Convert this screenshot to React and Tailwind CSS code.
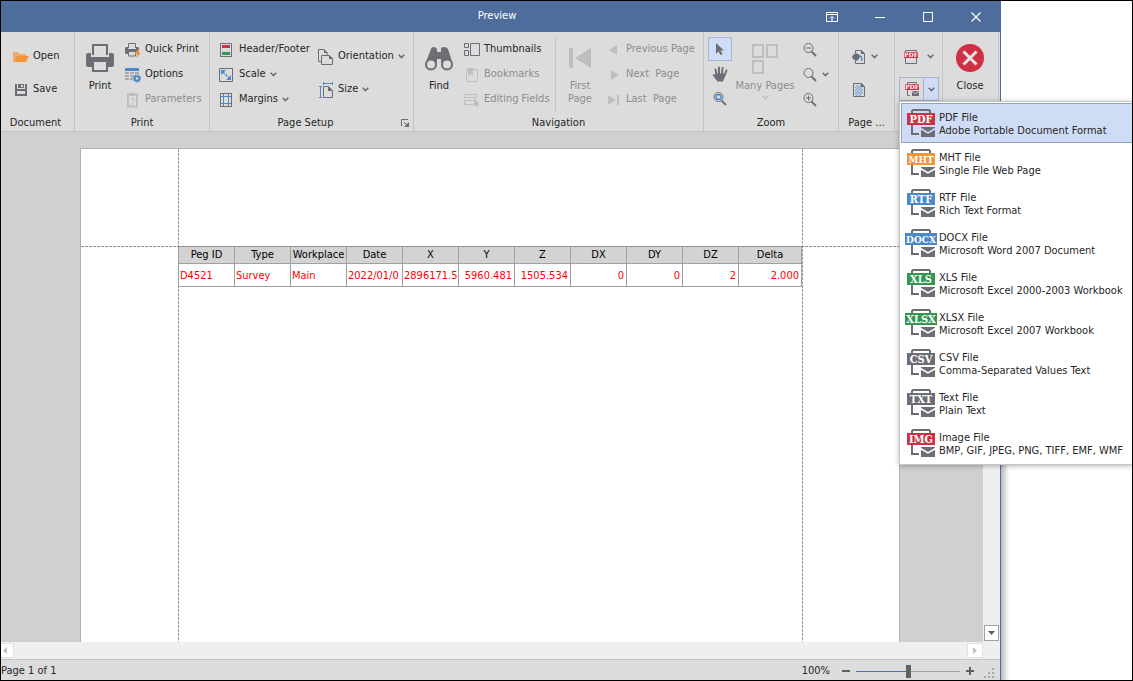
// src/App.jsx
import React, { useState } from 'react';

const GRAY = '#6d6d75';
const DIM = '#bebebe';

const exportFormats = [
  { tag: 'PDF', name: 'PDF File', detail: 'Adobe Portable Document Format', color: '#d12f46', size: 11 },
  { tag: 'MHT', name: 'MHT File', detail: 'Single File Web Page', color: '#f0973c', size: 10 },
  { tag: 'RTF', name: 'RTF File', detail: 'Rich Text Format', color: '#4b89c8', size: 11 },
  { tag: 'DOCX', name: 'DOCX File', detail: 'Microsoft Word 2007 Document', color: '#4b89c8', size: 10, wide: true },
  { tag: 'XLS', name: 'XLS File', detail: 'Microsoft Excel 2000-2003 Workbook', color: '#379552', size: 11 },
  { tag: 'XLSX', name: 'XLSX File', detail: 'Microsoft Excel 2007 Workbook', color: '#379552', size: 11, wide: true },
  { tag: 'CSV', name: 'CSV File', detail: 'Comma-Separated Values Text', color: GRAY, size: 11 },
  { tag: 'TXT', name: 'Text File', detail: 'Plain Text', color: GRAY, size: 11 },
  { tag: 'IMG', name: 'Image File', detail: 'BMP, GIF, JPEG, PNG, TIFF, EMF, WMF', color: '#d12f46', size: 11 },
];

const columns = [
  { title: 'Peg ID', value: 'D4521' },
  { title: 'Type', value: 'Survey' },
  { title: 'Workplace', value: 'Main' },
  { title: 'Date', value: '2022/01/0' },
  { title: 'X', value: '2896171.5', number: true },
  { title: 'Y', value: '5960.481', number: true },
  { title: 'Z', value: '1505.534', number: true },
  { title: 'DX', value: '0', number: true },
  { title: 'DY', value: '0', number: true },
  { title: 'DZ', value: '2', number: true },
  { title: 'Delta', value: '2.000', number: true },
];

const Svg = ({ w = 16, h = 16, children }) => (
  <svg width={w} height={h} viewBox={`0 0 ${w} ${h}`} fill="none" className="shrink-0" aria-hidden="true">
    {children}
  </svg>
);

const Chevron = ({ color = GRAY }) => (
  <Svg w={7} h={5}>
    <path d="M0.7 0.8 3.5 3.6 6.3 0.8" stroke={color} strokeWidth="1.6" />
  </Svg>
);

/* ---------- icons ---------- */

const OpenIcon = () => (
  <Svg>
    <path d="M0 3h5l1 2h7v2H4L1 13H0z" fill="#f0a968" />
    <path d="M4 7h12l-3 6H1z" fill="#f3953a" />
  </Svg>
);

const SaveIcon = () => (
  <Svg>
    <path d="M2 2h2v5h8V2h2v12H2z" fill={GRAY} />
    <path d="M5 2h6v4H5z" fill={GRAY} />
    <path d="M8 3h2v2H8z" fill="#dcdcdc" />
    <path d="M4 9h8v3H4z" fill="#dcdcdc" />
  </Svg>
);

const PrintIcon = () => (
  <Svg w={28} h={28}>
    <path d="M7 11V1h14v10" stroke={GRAY} strokeWidth="2" />
    <path d="M1.500 9H5v4h18V9h3.500L28 10.500V21.500L26.500 23H1.500L0 21.500V10.500z" fill={GRAY} />
    <path d="M7 17h14v10H7z" fill="#dcdcdc" stroke={GRAY} strokeWidth="2" />
  </Svg>
);

const QuickPrintIcon = () => (
  <Svg>
    <path d="M3.500 6V1.500h7V6" stroke={GRAY} />
    <path d="M1 5h2v2h8V5h2l1 1v5l-1 1H1l-1-1V6z" fill={GRAY} />
    <path d="M3.500 9.500h7v4.500h-7z" fill="#dcdcdc" stroke={GRAY} />
    <path d="M13.500 7 9 12h3l-1 4 5-5h-3l2-4z" fill="#f3953a" />
  </Svg>
);

const OptionsIcon = () => (
  <Svg>
    <path d="M0 1h14v3H0z" fill="#4b89c8" />
    <path d="M0 5h4v2H0zM5 5h4v2H5zM10 5h4v2h-4zM0 8h4v2H0zM5 8h4v2H5zM0 11h4v2H0zM5 11h3v2H5z" fill="#a8a8aa" />
    <circle cx="12" cy="11.500" r="2.300" stroke="#4b89c8" strokeWidth="2" />
    <circle cx="12" cy="11.500" r="3.600" stroke="#4b89c8" strokeWidth="1.200" strokeDasharray="1.400 1.400" />
  </Svg>
);

const ParametersIcon = () => (
  <Svg>
    <path d="M3 2.500v12h9v-12z" stroke={DIM} strokeWidth="2" />
    <path d="M5 1h5v3H5z" fill={DIM} />
    <path d="M6 7.500V6.500h3v2L7.500 9.500v1M7.500 11.500v1" stroke={DIM} />
  </Svg>
);

const HeaderFooterIcon = () => (
  <Svg>
    <path d="M1.500 1.500h11v13h-11z" stroke={GRAY} />
    <path d="M3 3h8v3H3z" fill="#d12f46" />
    <path d="M3 10h8v3H3z" fill="#379552" />
  </Svg>
);

const ScaleIcon = () => (
  <Svg>
    <path d="M.5 1.500h13v13H.5z" stroke={GRAY} />
    <path d="M4 5l6 6" stroke="#4b89c8" strokeWidth="1.500" strokeDasharray="2.500 1" />
    <path d="M2 3h5L2 8zM12 13H7l5-5z" fill="#4b89c8" />
  </Svg>
);

const MarginsIcon = () => (
  <Svg>
    <path d="M1.500 1.500h11v13h-11z" stroke={GRAY} />
    <path d="M4.500 2v12M9.500 2v12M2 4.500h10M2 11.500h10" stroke="#4b89c8" />
  </Svg>
);

const OrientationIcon = () => (
  <Svg>
    <path d="M3.500 12.500h-3v-12H6l3 3V6" stroke={GRAY} />
    <path d="M6 0v4h3.500z" fill={GRAY} />
    <path d="M3.500 6.500h8l3 3v6h-11z" fill="#dcdcdc" stroke={GRAY} />
    <path d="M11 6v4h4z" fill={GRAY} />
  </Svg>
);

const SizeIcon = () => (
  <Svg>
    <path d="M2.500 4v11.500M1 4.500h3M1 15.500h3M5 1.500h9M5.500 0v3M14.500 0v3" stroke="#4b89c8" />
    <path d="M5.500 4.500h5l4 4v7h-9z" stroke={GRAY} />
    <path d="M10 4v5h5z" fill={GRAY} />
  </Svg>
);

const FindIcon = () => (
  <Svg w={28} h={28}>
    <path d="M6 5Q6 3 8.500 3T12 5v3h4V5q0-2 3-2t4 2l4.500 14H16v-4h-4v4H.5z" fill={GRAY} />
    <circle cx="6" cy="20.500" r="5" fill="#dcdcdc" stroke={GRAY} strokeWidth="2" />
    <circle cx="22" cy="20.500" r="5" fill="#dcdcdc" stroke={GRAY} strokeWidth="2" />
    <path d="M12 9h4v6h-4z" fill={GRAY} />
  </Svg>
);

const ThumbnailsIcon = () => (
  <Svg>
    <path d="M.5 1.500h4v4h-4zM.5 8.500h4v5h-4zM6.500 1.500h9v12h-9z" stroke={GRAY} />
  </Svg>
);

const BookmarksIcon = () => (
  <Svg>
    <path d="M2.500 2.500h11v12h-11z" stroke={DIM} />
    <path d="M4 1h5v8L6.500 7 4 9z" fill={DIM} />
  </Svg>
);

const EditingFieldsIcon = () => (
  <Svg>
    <path d="M.5 2.500h12v3H.5zM9 8.500H.5v4H9" stroke={DIM} />
    <path d="M10 6v9l2-2 1.500 3 1-.5L13.500 12.500H16z" fill={DIM} />
  </Svg>
);

const FirstPageIcon = () => (
  <Svg w={22} h={28}>
    <path d="M0 4h4v20H0zM22 4v20L6 14z" fill={DIM} />
  </Svg>
);

const PreviousIcon = () => (
  <Svg w={12}>
    <path d="M9 3v10L1 8z" fill={DIM} />
  </Svg>
);

const NextIcon = () => (
  <Svg w={12}>
    <path d="M3 3v10l8-5z" fill={DIM} />
  </Svg>
);

const LastIcon = () => (
  <Svg w={12}>
    <path d="M0 3v10l8-5zM9 3h2v10H9z" fill={DIM} />
  </Svg>
);

const PointerIcon = () => (
  <Svg>
    <path d="M4 2v11l2.500-2.500L8.500 14l2-1-2-3.500H12z" fill={GRAY} />
  </Svg>
);

const HandIcon = () => (
  <Svg>
    <path d="M4.500 9 3.500 3.500M7 8V1.500M10 8l.6-6M12.500 9.500l2-5" stroke={GRAY} strokeWidth="2" strokeLinecap="round" />
    <path d="M3.500 7.500h9.500v3l-2 5H5.500L.5 9Q1.500 7.500 3.500 9z" fill={GRAY} />
  </Svg>
);

const Magnifier = ({ kind }) => (
  <Svg>
    <circle cx="6.500" cy="6" r="4.500" stroke={GRAY} />
    <path d="M9.500 9.500 14 14" stroke={GRAY} strokeWidth="1.800" />
    {kind === 'out' && <path d="M4 6h5" stroke={GRAY} />}
    {kind === 'in' && <path d="M4 6h5M6.500 3.500v5" stroke={GRAY} />}
    {kind === 'tool' && <circle cx="6.500" cy="6" r="2.500" stroke="#4b89c8" strokeWidth="1.400" />}
  </Svg>
);

const ManyPagesIcon = () => (
  <Svg w={26} h={30}>
    <path d="M1 1h10v12H1zM15 1h10v12H15zM1 17h10v12H1z" stroke={DIM} strokeWidth="2" />
  </Svg>
);

const PageColorIcon = () => (
  <Svg>
    <path d="M4.500 4V1.500h6l3 3v10h-9V12" stroke={GRAY} />
    <path d="M10 1v4h4z" fill={GRAY} />
    <path d="M1 8l1.500-2.500L5 4l3 1.500L9 8l-2 3-2 1-2.500-1.500z" fill={GRAY} />
    <path d="M8 6q4 0 3.500 6-2 0-1.500-3Q9.500 7.500 8 7.500z" fill="#4b89c8" />
  </Svg>
);

const WatermarkIcon = () => (
  <Svg>
    <path d="M4 6l3-3M4 9l6-6M4 12l8-8M5 14l7-7M8 14l4-4" stroke="#7fa9d6" strokeWidth="1.200" />
    <path d="M2.500 1.500h8l3 3v10h-11z" stroke={GRAY} />
    <path d="M10 1v4h4z" fill={GRAY} />
  </Svg>
);

const SmallPdfIcon = ({ mail }) => (
  <Svg>
    {mail ? (
      <g>
        <path d="M3.500 3V1.500h9V3M3.500 9v5.500H6" stroke={GRAY} />
        <path d="M8 10h7v5H8z" fill={GRAY} />
        <path d="M8 10.500l3.500 2 3.500-2" stroke="#dcdcdc" strokeWidth="0.8" />
      </g>
    ) : (
      <path d="M2.500 3V1.500h11V3M2.500 9v5.500h11V9" stroke={GRAY} />
    )}
    <path d="M1 3h14v6H1z" fill="#d12f46" />
    <text x="8" y="8" fill="#fff" fontSize="6" fontWeight="700" textAnchor="middle" fontFamily="DejaVu Serif, serif">
      PDF
    </text>
  </Svg>
);

const CloseIcon = () => (
  <Svg w={28} h={28}>
    <circle cx="14" cy="14" r="14" fill="#d12f46" />
    <path d="M7.500 7.500l13 13M20.500 7.500l-13 13" stroke="#e6e6e6" strokeWidth="3" />
  </Svg>
);

const FormatIcon = ({ format, active }) => (
  <Svg w={32} h={28}>
    <path d="M7 5V2l1-1h16l1 1v3M7 16v9h7" stroke={GRAY} strokeWidth="2" />
    <path d="M16 18h14v10H16z" fill={GRAY} />
    <path d="M15.500 19.500 23 24l7.500-4.500" stroke={active ? '#cfdcf5' : '#fff'} strokeWidth="1.500" />
    <rect x={format.wide ? 0 : 2} y="4" width={format.wide ? 32 : 28} height="12" fill={format.color} />
    <text
      x="16"
      y="14"
      fill="#fff"
      fontSize={format.size}
      fontWeight="700"
      textAnchor="middle"
      fontFamily="DejaVu Serif Condensed, DejaVu Serif, serif"
    >
      {format.tag}
    </text>
  </Svg>
);

/* ---------- ribbon parts ---------- */

const Group = ({ title, className, children }) => (
  <section className={`flex shrink-0 flex-col border-r border-[#c4c4c4] pt-[5px] ${className}`}>
    <div className="flex h-[78px] shrink-0 items-start">{children}</div>
    <h2 className="flex h-4 items-center justify-center">{title}</h2>
  </section>
);

const Column = ({ className = '', children }) => (
  <div className={`flex shrink-0 flex-col ${className}`}>{children}</div>
);

const Command = ({ icon, label, tall, menu, disabled }) => (
  <button
    type="button"
    disabled={disabled}
    className={`flex items-center gap-1 whitespace-pre text-left disabled:text-[#8c8c8c] ${tall ? 'h-[33px]' : 'h-[25px]'}`}
  >
    {icon}
    {label}
    {menu && <Chevron />}
  </button>
);

const BigCommand = ({ icon, label, className = '', disabled, children }) => (
  <button
    type="button"
    disabled={disabled}
    className={`flex shrink-0 flex-col items-center pt-[7px] leading-[13px] disabled:text-[#8c8c8c] ${className}`}
  >
    <span className="flex h-[35px] items-start">{icon}</span>
    {label}
    {children}
  </button>
);

const IconButton = ({ label, className = '', children }) => (
  <button type="button" aria-label={label} className={`flex items-center ${className}`}>
    {children}
  </button>
);

const Ribbon = () => (
  <div className="flex h-[100px] shrink-0 border-b border-[#c4c4c4] bg-[#dcdcdc]">
    <Group title="Document" className="w-[74px] pr-1">
      <Column className="pt-[3px] pl-3">
        <Command tall icon={<OpenIcon />} label="Open" />
        <Command tall icon={<SaveIcon />} label="Save" />
      </Column>
    </Group>
    <Group title="Print" className="w-[135px]">
      <BigCommand icon={<PrintIcon />} label="Print" className="w-[50px]" />
      <Column>
        <Command icon={<QuickPrintIcon />} label="Quick Print" />
        <Command icon={<OptionsIcon />} label="Options" />
        <Command icon={<ParametersIcon />} label="Parameters" disabled />
      </Column>
    </Group>
    <Group
      title={
        <>
          <span className="flex-1 text-center">Page Setup</span>
          <IconButton label="Page Setup dialog" className="mr-1">
            <Svg w={8} h={8}>
              <path d="M.5 7V.5H7" stroke={GRAY} />
              <path d="M3 3l3 3" stroke={GRAY} />
              <path d="M8 3v5H3z" fill={GRAY} />
            </Svg>
          </IconButton>
        </>
      }
      className="w-[204px]"
    >
      <Column className="w-[108px] pl-[9px]">
        <Command icon={<HeaderFooterIcon />} label="Header/Footer" />
        <Command icon={<ScaleIcon />} label="Scale" menu />
        <Command icon={<MarginsIcon />} label="Margins" menu />
      </Column>
      <Column className="pt-[3px]">
        <Command tall icon={<OrientationIcon />} label="Orientation" menu />
        <Command tall icon={<SizeIcon />} label="Size" menu />
      </Column>
    </Group>
    <Group title="Navigation" className="w-[290px]">
      <BigCommand icon={<FindIcon />} label="Find" className="w-[50px]" />
      <Column className="w-[92px] border-r border-[#c4c4c4]">
        <Command icon={<ThumbnailsIcon />} label="Thumbnails" />
        <Command icon={<BookmarksIcon />} label="Bookmarks" disabled />
        <Command icon={<EditingFieldsIcon />} label="Editing Fields" disabled />
      </Column>
      <BigCommand icon={<FirstPageIcon />} label="First" className="w-12" disabled>
        <span>Page</span>
      </BigCommand>
      <Column className="pl-1 [&>button]:gap-1.5">
        <Command icon={<PreviousIcon />} label="Previous Page" disabled />
        <Command icon={<NextIcon />} label="Next  Page" disabled />
        <Command icon={<LastIcon />} label="Last  Page" disabled />
      </Column>
    </Group>
    <Group title="Zoom" className="w-[135px]">
      <Column className="pl-1">
        <IconButton label="Pointer" className="h-6 w-6 justify-center border border-[#a3b7dc] bg-[#cfdcf5]">
          <PointerIcon />
        </IconButton>
        <IconButton label="Hand Tool" className="h-[25px] w-6 justify-center">
          <HandIcon />
        </IconButton>
        <IconButton label="Magnifier" className="h-[25px] w-6 justify-center">
          <Magnifier kind="tool" />
        </IconButton>
      </Column>
      <BigCommand icon={<ManyPagesIcon />} label="Many Pages" className="w-[66px] whitespace-nowrap" disabled>
        <span className="flex h-[11px] items-center">
          <Chevron color={DIM} />
        </span>
      </BigCommand>
      <Column className="pl-1">
        <IconButton label="Zoom Out" className="h-[25px]">
          <Magnifier kind="out" />
        </IconButton>
        <IconButton label="Zoom" className="h-[25px] gap-1">
          <Magnifier />
          <Chevron />
        </IconButton>
        <IconButton label="Zoom In" className="h-[25px]">
          <Magnifier kind="in" />
        </IconButton>
      </Column>
    </Group>
    <Group title="Page ..." className="w-14">
      <Column className="pt-[3px] pl-3">
        <IconButton label="Page Color" className="h-[33px] gap-1">
          <PageColorIcon />
          <Chevron />
        </IconButton>
        <IconButton label="Watermark" className="h-[33px]">
          <WatermarkIcon />
        </IconButton>
      </Column>
    </Group>
    <Group className="w-12">
      <Column className="pt-[3px] pl-1">
        <IconButton label="Export To" className="h-[33px] gap-2 pl-1">
          <SmallPdfIcon />
          <Chevron />
        </IconButton>
        <div className="mt-1 flex h-6 border border-[#a9b4ca]">
          <IconButton label="E-Mail As" className="w-[23px] justify-center">
            <SmallPdfIcon mail />
          </IconButton>
          <IconButton label="E-Mail As options" className="w-[15px] justify-center border-l border-[#a9b4ca] bg-[#cfdcf5]">
            <Chevron />
          </IconButton>
        </div>
      </Column>
    </Group>
    <Group className="w-14">
      <BigCommand icon={<CloseIcon />} label="Close" className="w-[54px]" />
    </Group>
  </div>
);

const TitleBar = () => (
  <header className="flex h-[31px] shrink-0 items-center bg-[#4e6d9c] text-white">
    <h1 className="flex-1 pl-[185px] text-center">Preview</h1>
    <IconButton label="Ribbon Display Options" className="h-full w-12 justify-center">
      <Svg w={12} h={12}>
        <path d="M.5 1.500h11v9H.5zM0 3.500h12M6 10V5.500M4 7.500l2-2 2 2" stroke="#fff" />
      </Svg>
    </IconButton>
    <IconButton label="Minimize" className="h-full w-12 justify-center">
      <Svg w={10} h={10}>
        <path d="M0 5.500h10" stroke="#fff" />
      </Svg>
    </IconButton>
    <IconButton label="Maximize" className="h-full w-12 justify-center">
      <Svg w={10} h={10}>
        <path d="M.5.5h9v9h-9z" stroke="#fff" />
      </Svg>
    </IconButton>
    <IconButton label="Close window" className="h-full w-12 justify-center">
      <Svg w={10} h={10}>
        <path d="M.5.5l9 9M9.500.5l-9 9" stroke="#fff" strokeWidth="1.200" />
      </Svg>
    </IconButton>
  </header>
);

const ReportTable = () => (
  <table className="w-[624px] table-fixed border-collapse">
    <thead>
      <tr className="h-[17px] bg-[#d3d3d3] text-black">
        {columns.map((col) => (
          <th
            key={col.title}
            className="w-14 overflow-hidden border border-[#a0a0a0] p-0 text-center leading-4 font-normal whitespace-nowrap last:w-auto"
          >
            {col.title}
          </th>
        ))}
      </tr>
    </thead>
    <tbody>
      <tr className="h-[23px] text-[#ff0000]">
        {columns.map((col) => (
          <td
            key={col.title}
            className={`overflow-hidden border border-[#a0a0a0] px-px pt-px pb-0 leading-4 whitespace-nowrap ${col.number ? 'pr-0.5 text-right' : 'text-left'}`}
          >
            {col.value}
          </td>
        ))}
      </tr>
    </tbody>
  </table>
);

const Page = () => (
  <div className="relative w-[820px] shrink-0 border-x border-t border-[#b0b0b0] bg-white px-[97px] pt-[97px]">
    <ReportTable />
    {/* margin guides */}
    <div className="absolute inset-y-0 left-[97px] w-px bg-[repeating-linear-gradient(180deg,#9c9c9c_0_3px,transparent_3px_4px)]" />
    <div className="absolute inset-y-0 right-24 w-px bg-[repeating-linear-gradient(180deg,#9c9c9c_0_3px,transparent_3px_4px)]" />
    <div className="absolute inset-x-0 top-[97px] h-px bg-[repeating-linear-gradient(90deg,#8c8c8c_0_3px,transparent_3px_4px)]" />
  </div>
);

const StatusBar = () => {
  const [zoom, setZoom] = useState(50);

  return (
    <footer className="flex h-[21px] shrink-0 items-center border-t border-[#c4c4c4] bg-[#dcdcdc] pt-0.5 pr-1">
      <span className="flex-1">Page 1 of 1</span>
      <label htmlFor="zoom" className="pr-3">
        100%
      </label>
      <IconButton label="Zoom out">
        <Svg w={8} h={8}>
          <path d="M0 4h8" stroke="#606060" strokeWidth="2" />
        </Svg>
      </IconButton>
      <input
        id="zoom"
        type="range"
        min="0"
        max="100"
        value={zoom}
        onChange={(e) => setZoom(Number(e.target.value))}
        className="mx-1.5 h-4 w-[104px] appearance-none bg-transparent [&::-webkit-slider-runnable-track]:h-px [&::-webkit-slider-runnable-track]:bg-[linear-gradient(90deg,#4e6d9c_50%,#a0a0a0_50%)] [&::-webkit-slider-thumb]:-mt-1.5 [&::-webkit-slider-thumb]:h-[13px] [&::-webkit-slider-thumb]:w-[5px] [&::-webkit-slider-thumb]:appearance-none [&::-webkit-slider-thumb]:bg-[#606060]"
      />
      <IconButton label="Zoom in" className="mr-2.5">
        <Svg w={8} h={8}>
          <path d="M0 4h8M4 0v8" stroke="#606060" strokeWidth="2" />
        </Svg>
      </IconButton>
      <span className="self-end pb-0.5">
        <Svg w={12} h={12}>
          <path d="M8 2h2v2H8zM4 6h2v2H4zM8 6h2v2H8zM0 10h2v2H0zM4 10h2v2H4zM8 10h2v2H8z" fill="#a8a8a8" />
        </Svg>
      </span>
    </footer>
  );
};

const ExportMenu = () => {
  const [active, setActive] = useState('PDF');

  return (
    <div
      role="menu"
      className="absolute top-[100px] right-0 w-[233px] border-y border-l border-[#c6c6c6] bg-white py-px pl-px shadow-[0_1px_5px_rgba(0,0,0,0.3)]"
    >
      {exportFormats.map((format) => {
        const isActive = format.tag === active;
        return (
          <button
            key={format.tag}
            type="button"
            role="menuitem"
            onMouseEnter={() => setActive(format.tag)}
            className={`flex h-10 w-full items-center gap-0.5 border-y border-l pl-[3px] text-left whitespace-nowrap ${isActive ? 'border-[#94a3c2] bg-[#cfdcf5]' : 'border-transparent'}`}
          >
            <FormatIcon format={format} active={isActive} />
            <span className="pt-0.5 leading-[13px]">
              {format.name}
              <br />
              {format.detail}
            </span>
          </button>
        );
      })}
    </div>
  );
};

function App() {
  return (
    <div className="relative flex h-screen overflow-hidden border border-black bg-white font-['DejaVu_Sans_Condensed','Noto_Sans',sans-serif] text-[11px] text-[#262626]">
      <div className="flex min-w-0 flex-1 flex-col border-r border-[#4e6d9c]">
        <TitleBar />
        <Ribbon />
        <main className="flex min-h-0 flex-1 bg-[#d0d0d0]">
          <div className="flex min-w-0 flex-1 justify-center overflow-hidden pt-4 pr-1">
            <Page />
          </div>
          <div className="flex w-[17px] flex-col items-center justify-end bg-[#efefef] pb-px">
            <IconButton label="Scroll down" className="h-4 w-[15px] justify-center border border-[#a0a0a0] bg-white">
              <Svg w={7} h={4}>
                <path d="M0 0h7L3.500 4z" fill="#606060" />
              </Svg>
            </IconButton>
          </div>
        </main>
        <div className="flex h-[17px] shrink-0 items-center justify-between bg-[#efefef] pr-[17px]">
          <IconButton label="Scroll left" className="h-[15px] w-[13px] border border-l-0 border-[#e2e2e2] bg-white pl-0.5">
            <Svg w={4} h={7}>
              <path d="M4 0v7L0 3.500z" fill="#c0c0c0" />
            </Svg>
          </IconButton>
          <IconButton label="Scroll right" className="h-[15px] w-4 justify-center border border-[#e2e2e2] bg-white">
            <Svg w={4} h={7}>
              <path d="M0 0v7l4-3.500z" fill="#c0c0c0" />
            </Svg>
          </IconButton>
        </div>
        <StatusBar />
      </div>
      <div className="flex w-[131px] shrink-0 pt-[100px]">
        <div className="w-2 bg-linear-to-r from-[#b8b8b8] to-white" />
      </div>
      <ExportMenu />
    </div>
  );
}

export default App;
